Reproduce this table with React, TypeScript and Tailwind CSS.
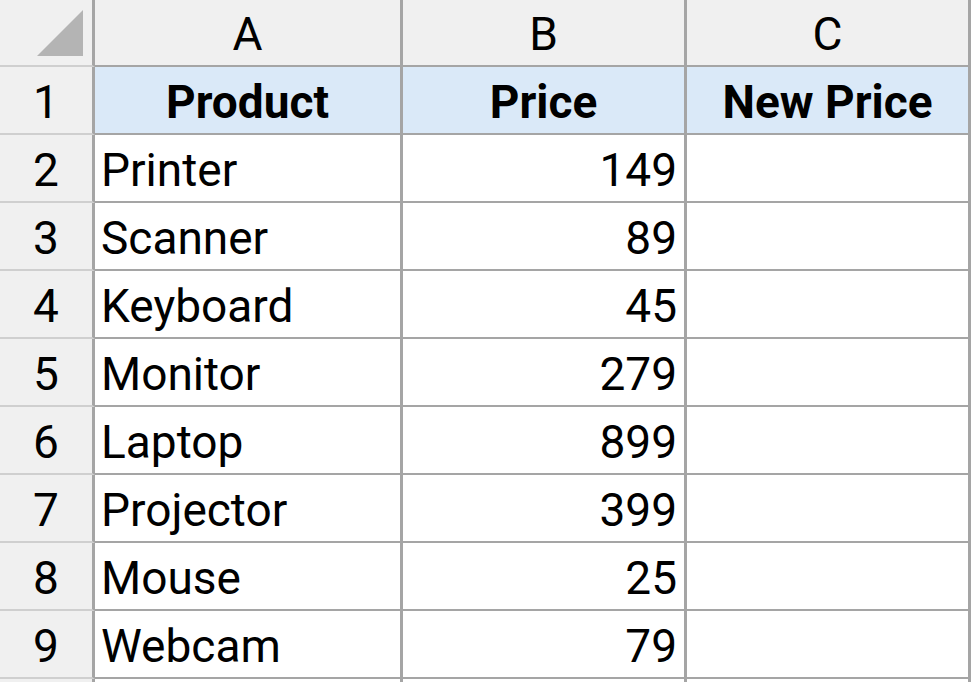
const rows = [
  { name: "Printer", price: 149 },
  { name: "Scanner", price: 89 },
  { name: "Keyboard", price: 45 },
  { name: "Monitor", price: 279 },
  { name: "Laptop", price: 899 },
  { name: "Projector", price: 399 },
  { name: "Mouse", price: 25 },
  { name: "Webcam", price: 79 },
];

export default function App() {
  return (
    <div
      className="w-[972px] h-[682px] overflow-hidden bg-white text-black"
      style={{ fontFamily: "Roboto, 'Liberation Sans', sans-serif" }}
    >
      <div className="grid grid-cols-[95px_308px_284px_284px] auto-rows-min">
        {/* column headers */}
        <div className="h-[67px] bg-[#f0f0f0] border-r-[3px] border-b-2 border-r-[#a5a5a5] border-b-[#cfcfcf] relative">
          <svg className="absolute left-0 top-0" width="92" height="65" viewBox="0 0 92 65">
            <polygon points="37,56 83,56 83,10" fill="#b4b4b4" />
          </svg>
        </div>
        {["A", "B", "C"].map((c) => (
          <div
            key={c}
            className="h-[67px] bg-[#f0f0f0] border-r-[3px] border-b-2 border-[#a5a5a5] flex items-center justify-center text-[46px] leading-none pt-[3px]"
          >
            {c}
          </div>
        ))}

        {/* row 1 */}
        <div className="h-[68px] bg-[#f0f0f0] border-r-[3px] border-b-2 border-r-[#a5a5a5] border-b-[#cfcfcf] flex items-center justify-center text-[46px] leading-none pt-[4px]">
          1
        </div>
        {["Product", "Price", "New Price"].map((h) => (
          <div
            key={h}
            className="h-[68px] bg-[#dae9f8] border-r-[3px] border-b-2 border-[#a5a5a5] flex items-center justify-center text-[46px] font-bold leading-none pt-[4px]"
          >
            {h}
          </div>
        ))}

        {rows.map((r, i) => (
          <div key={r.name} className="contents">
            <div className="h-[68px] bg-[#f0f0f0] border-r-[3px] border-b-2 border-r-[#a5a5a5] border-b-[#cfcfcf] flex items-center justify-center text-[46px] leading-none pt-[4px]">
              {i + 2}
            </div>
            <div className="h-[68px] border-r-[3px] border-b-2 border-[#a5a5a5] flex items-center pl-[6px] text-[46px] leading-none pt-[4px]">
              {r.name}
            </div>
            <div className="h-[68px] border-r-[3px] border-b-2 border-[#a5a5a5] flex items-center justify-end pr-[7px] text-[46px] leading-none pt-[4px]">
              {r.price}
            </div>
            <div className="h-[68px] border-r-[3px] border-b-2 border-[#a5a5a5]" />
          </div>
        ))}

        <div className="h-[10px] bg-[#f0f0f0] border-r-[3px] border-[#a5a5a5]" />
        <div className="h-[10px] border-r-[3px] border-[#a5a5a5]" />
        <div className="h-[10px] border-r-[3px] border-[#a5a5a5]" />
        <div className="h-[10px] border-r-[3px] border-[#a5a5a5]" />
      </div>
    </div>
  );
}
